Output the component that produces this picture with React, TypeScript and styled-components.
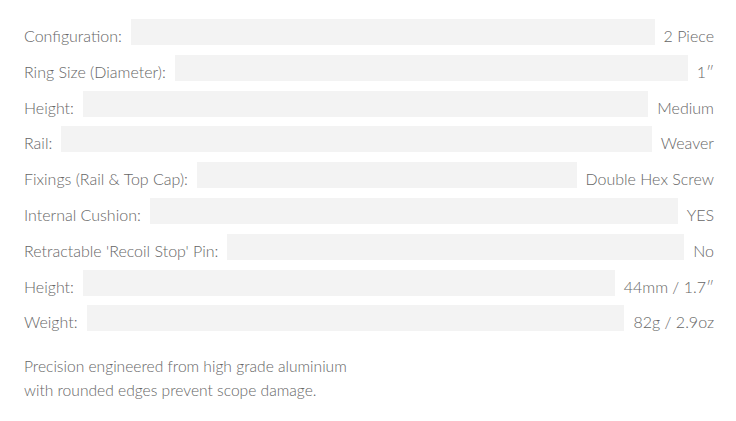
import styled, { createGlobalStyle } from 'styled-components';

const GlobalStyle = createGlobalStyle`
  body {
    margin: 0;
    background: #ffffff;
    font-family: Lato, 'Open Sans', sans-serif;
  }
`;

const specs = [
  { label: 'Configuration:', value: '2 Piece' },
  { label: 'Ring Size (Diameter):', value: '1″' },
  { label: 'Height:', value: 'Medium' },
  { label: 'Rail:', value: 'Weaver' },
  { label: 'Fixings (Rail & Top Cap):', value: 'Double Hex Screw' },
  { label: 'Internal Cushion:', value: 'YES' },
  { label: "Retractable 'Recoil Stop' Pin:", value: 'No' },
  { label: 'Height:', value: '44mm / 1.7″' },
  { label: 'Weight:', value: '82g / 2.9oz' },
];

export default function App() {
  return (
    <>
      <GlobalStyle />
      <SpecWrap>
        <SpecList>
          {specs.map((spec, i) => (
            <SpecRow key={i}>
              <SpecText>{spec.label}</SpecText>
              <Leader />
              <SpecText>{spec.value}</SpecText>
            </SpecRow>
          ))}
        </SpecList>
        <Description>
          Precision engineered from high grade aluminium
          <br />
          with rounded edges prevent scope damage.
        </Description>
      </SpecWrap>
    </>
  );
}

const SpecWrap = styled.div`
  width: 736px;
  padding: 19px 22px 0 24px;
  box-sizing: border-box;
`;

const SpecList = styled.div`
  display: flex;
  flex-direction: column;
  gap: 9.8px;
`;

const SpecRow = styled.div`
  display: flex;
  align-items: center;
  gap: 9px;
  height: 26px;
`;

const SpecText = styled.span`
  flex: none;
  margin-top: 8px;
  font-size: 16px;
  font-weight: 300;
  line-height: 18px;
  color: #666666;
  white-space: nowrap;
`;

const Leader = styled.div`
  flex: 1;
  height: 26px;
  background: #f3f3f3;
`;

const Description = styled.p`
  margin: 23px 0 0;
  font-size: 15.6px;
  font-weight: 300;
  line-height: 24px;
  color: #666666;
`;
